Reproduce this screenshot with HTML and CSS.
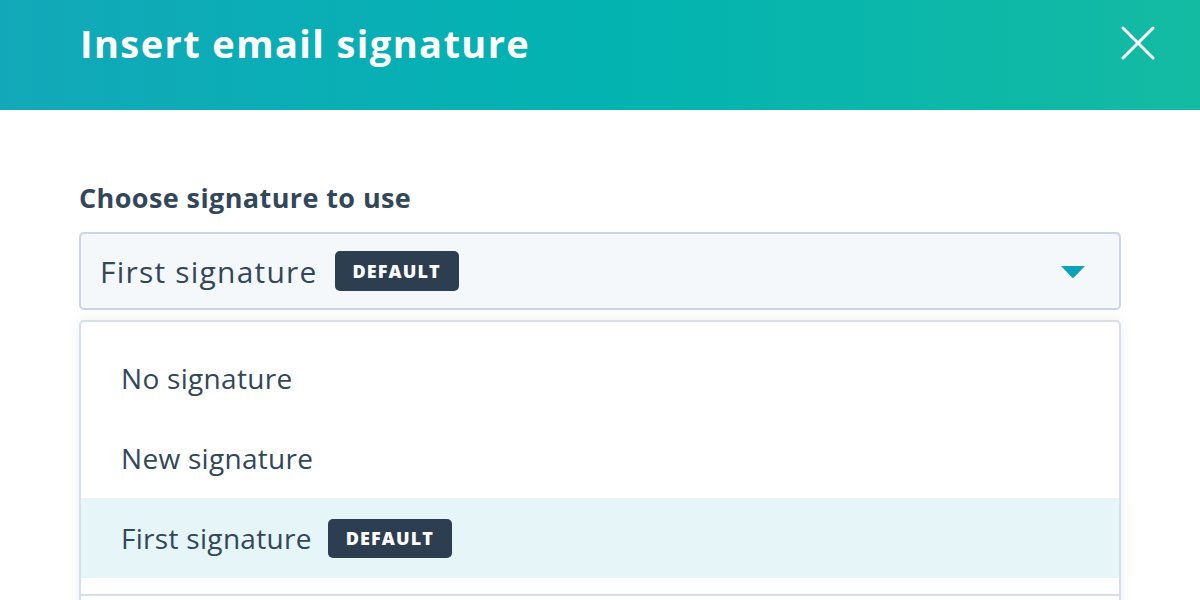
FILE: index.html
```html
<!DOCTYPE html>
<html lang="en">
<head>
<meta charset="utf-8">
<title>Insert email signature</title>
<link rel="stylesheet" href="styles.css">
</head>
<body>
<div class="modal">
  <header class="modal-header">
    <h1 class="modal-title">Insert email signature</h1>
    <button class="close-btn" aria-label="Close">
      <svg width="34" height="34" viewBox="0 0 34 34" aria-hidden="true">
        <path d="M2 2 L32 32 M32 2 L2 32" stroke="#ffffff" stroke-width="3" stroke-linecap="round" fill="none"/>
      </svg>
    </button>
  </header>
  <main class="modal-body">
    <label class="field-label">Choose signature to use</label>
    <div class="select">
      <div class="select-value">
        <span>First signature</span>
        <span class="badge">Default</span>
      </div>
      <svg class="caret" width="24" height="12" viewBox="0 0 24 12" aria-hidden="true">
        <path d="M0 0 H24 L13.2 11.2 Q12 12.4 10.8 11.2 Z" fill="#0fa1b8"/>
      </svg>
    </div>
    <div class="dropdown">
      <ul class="options">
        <li class="option">No signature</li>
        <li class="option">New signature</li>
        <li class="option is-active">First signature <span class="badge badge-sm">Default</span></li>
      </ul>
      <div class="dropdown-footer"></div>
    </div>
  </main>
</div>
</body>
</html>
```

FILE: styles.css
```css
* { box-sizing: border-box; }
html, body { margin: 0; padding: 0; }
body {
  background: #ffffff;
  font-family: "Open Sans", "Noto Sans", sans-serif;
  color: #33475b;
  width: 1200px;
  height: 600px;
  overflow: hidden;
}
.modal { width: 1200px; }
.modal-header {
  height: 110px;
  padding: 0 45px 24px 80px;
  display: flex;
  align-items: center;
  justify-content: space-between;
  background: linear-gradient(90deg, #12a8b9 0%, #02b3b1 50%, #14bba3 100%);
}
.modal-title {
  margin: 0;
  color: #ffffff;
  font-size: 38px;
  font-weight: 700;
  letter-spacing: 1.4px;
  line-height: 1;
}
.close-btn {
  background: none;
  border: 0;
  padding: 0;
  width: 34px;
  height: 34px;
  display: flex;
}
.modal-body {
  padding: 72px 79px 0 79px;
}
.field-label {
  display: block;
  font-size: 27px;
  font-weight: 700;
  letter-spacing: 0.4px;
  line-height: 32px;
  margin-bottom: 18px;
}
.select {
  height: 78px;
  background: #f5f8fa;
  border: 2px solid #cbd6e2;
  border-radius: 5px;
  display: flex;
  align-items: center;
  justify-content: space-between;
  padding: 0 34px 0 19px;
}
.select-value {
  display: flex;
  align-items: center;
  gap: 17px;
  font-size: 30px;
  letter-spacing: 1.2px;
}
.badge {
  display: inline-flex;
  align-items: center;
  height: 40px;
  padding: 0 18px;
  background: #2d3e50;
  color: #ffffff;
  border-radius: 5px;
  font-size: 18px;
  font-weight: 800;
  letter-spacing: 1.1px;
  text-transform: uppercase;
}
.caret { display: block; margin-top: 2px; }
.dropdown {
  margin-top: 10px;
  height: 320px;
  border: 2px solid #d6dfe8;
  border-radius: 5px;
  background: #ffffff;
  box-shadow: 0 0 16px rgba(45, 62, 80, 0.08);
}
.options {
  list-style: none;
  margin: 0;
  padding: 16px 0 16px 0;
}
.option {
  height: 80px;
  display: flex;
  align-items: center;
  gap: 16px;
  padding-left: 40px;
  font-size: 28px;
  letter-spacing: 0.3px;
}
.option.is-active { background: #e5f5f8; }
.badge-sm { height: 39px; }
.dropdown-footer {
  border-top: 2px solid #d6dfe8;
}
```
